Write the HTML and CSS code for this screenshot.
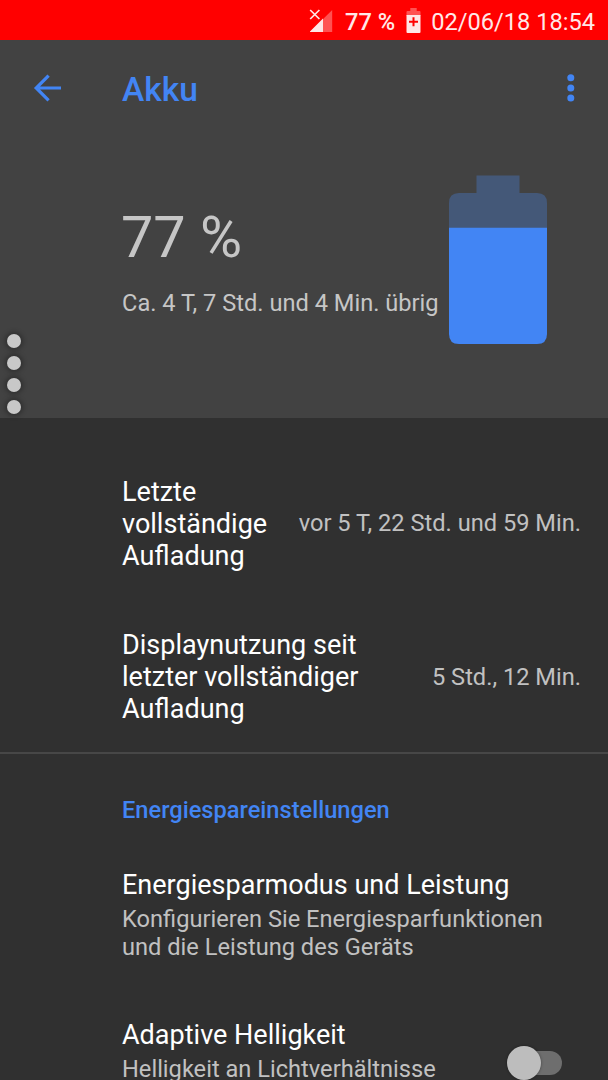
FILE: index.html
```html
<!DOCTYPE html>
<html lang="de">
<head>
<meta charset="utf-8">
<title>Akku</title>
<link rel="stylesheet" href="styles.css">
</head>
<body>
<div class="screen">
  <div class="statusbar">
    <svg class="signal" width="24" height="24" viewBox="0 0 24 24">
      <path d="M23.2 1V23H1Z" fill="#ff5252"/>
      <path d="M14 9.6V23H1V22.4Z" fill="#ffe6e6"/>
      <path d="M1.2 1L10.4 10M10.4 1L1.2 10" stroke="#ffe6e6" stroke-width="1.7"/>
    </svg>
    <span class="percent">77 %</span>
    <svg class="status-battery" width="15" height="26" viewBox="0 0 15 26">
      <path d="M4.3 0H10.7V3H13.5Q14.5 3 14.5 4V8H.5V4Q.5 3 1.5 3H4.3Z" fill="#ff5252"/>
      <path d="M.5 7H14.5V24Q14.5 25 13.5 25H1.5Q.5 25 .5 24Z" fill="#ffe6e6"/>
      <path d="M7.5 9.2V18.2M3 13.7H12" stroke="#f00" stroke-width="2"/>
    </svg>
    <span class="clock">02/06/18 18:54</span>
  </div>
  <header class="header">
    <div class="toolbar">
      <svg class="back" width="30" height="30" viewBox="0 0 30 30">
        <path d="M28 15H3M15.6 2.6L3.2 15L15.6 27.4" fill="none" stroke="#4285f4" stroke-width="3.2"/>
      </svg>
      <h1 class="title">Akku</h1>
      <svg class="more" width="8" height="28" viewBox="0 0 8 28">
        <circle cx="3.8" cy="3.8" r="3.5" fill="#4285f4"/>
        <circle cx="3.8" cy="13.9" r="3.5" fill="#4285f4"/>
        <circle cx="3.8" cy="24" r="3.5" fill="#4285f4"/>
      </svg>
    </div>
    <div class="summary">
      <div class="level">
        <div class="level-value">77 %</div>
        <div class="level-time">Ca. 4 T, 7 Std. und 4 Min. übrig</div>
      </div>
      <svg class="battery" width="98" height="170" viewBox="0 0 98 170">
        <path d="M27.5 .5H70.5V18H88Q98 18 98 28V53H0V28Q0 18 10 18H27.5Z" fill="#445878"/>
        <path d="M0 52.7H98V159Q98 169 88 169H10Q0 169 0 159Z" fill="#4285f4"/>
      </svg>
    </div>
  </header>
  <div class="handle"><i class="dot"></i><i class="dot"></i><i class="dot"></i><i class="dot"></i></div>
  <section class="stats">
    <div class="row">
      <div class="label">Letzte<br>vollständige<br>Aufladung</div>
      <div class="value">vor 5 T, 22 Std. und 59 Min.</div>
    </div>
    <div class="row">
      <div class="label">Displaynutzung seit<br>letzter vollständiger<br>Aufladung</div>
      <div class="value">5 Std., 12 Min.</div>
    </div>
  </section>
  <section class="settings">
    <h2 class="category">Energiespareinstellungen</h2>
    <div class="item">
      <div class="label">Energiesparmodus und Leistung</div>
      <div class="desc">Konfigurieren Sie Energiesparfunktionen<br>und die Leistung des Geräts</div>
    </div>
    <div class="item item-switch">
      <div>
        <div class="label">Adaptive Helligkeit</div>
        <div class="desc">Helligkeit an Lichtverhältnisse</div>
      </div>
      <div class="switch"><div class="thumb"></div></div>
    </div>
  </section>
</div>
</body>
</html>
```
FILE: styles.css
```css
* { box-sizing: border-box; }
body {
  margin: 0;
  background: #303030;
  color: #fff;
  font-family: Roboto, "Noto Sans", sans-serif;
}
.screen {
  position: relative;
  width: 608px;
  height: 1080px;
  overflow: hidden;
}
.statusbar {
  height: 40px;
  display: flex;
  align-items: flex-start;
  padding: 9px 13px 0 309px;
  background: #f00;
  color: #ffe8e8;
  font-size: 23.64px;
  line-height: 26px;
  white-space: nowrap;
}
.percent { margin-left: 12px; font-weight: 500; }
.signal { flex: none; }
.status-battery { flex: none; margin: -1px 0 0 auto; }
.clock { margin-left: 10px; }
.header { height: 378px; background: #424242; }
.toolbar {
  height: 95px;
  display: flex;
  align-items: center;
  padding: 0 33px;
}
.title {
  margin: 4px auto 0 59px;
  font-size: 33.6px;
  font-weight: 500;
  line-height: 40px;
  color: #4285f4;
}
.summary {
  display: flex;
  justify-content: space-between;
  padding: 40px 61px 0 122px;
}
.level { color: #c6c6c6; padding-top: 29px; white-space: nowrap; }
.level-value { margin-left: -1px; font-size: 57.5px; line-height: 68px; }
.level-time { margin-top: 17px; font-size: 23.64px; line-height: 28px; }
.battery { flex: none; margin-left: -20px; }
.handle {
  position: absolute;
  left: 7px;
  top: 334px;
  display: grid;
  gap: 8px;
}
.dot {
  width: 14px;
  height: 14px;
  border-radius: 50%;
  background: #c8c8c8;
  box-shadow: 0 0 5px 2px rgba(0, 0, 0, .3);
}
.stats {
  display: grid;
  gap: 57px;
  padding: 59px 28px 26px 122px;
  border-bottom: 2px solid #474747;
}
.row { display: flex; align-items: center; justify-content: space-between; height: 96px; }
.row .value { margin: -2px -1px 0 0; }
.row:first-child .value { margin-top: -4px; }
.label { font-size: 27.02px; line-height: 31.67px; white-space: nowrap; }
.value { font-size: 23.64px; line-height: 28px; color: #c1c1c1; white-space: nowrap; }
.settings { padding: 42px 46px 0 122px; }
.category {
  margin: 0;
  font-size: 23.64px;
  font-weight: 500;
  line-height: 28px;
  color: #4285f4;
}
.item { margin-top: 46px; }
.desc { margin-top: 3px; font-size: 23.64px; line-height: 28px; color: #c1c1c1; white-space: nowrap; }
.item-switch { display: flex; justify-content: space-between; margin-top: 59px; }
.item-switch .desc { margin-top: 4px; }
.switch {
  width: 51px;
  height: 24px;
  margin-top: 31px;
  border-radius: 12px;
  background: #6e6e6e;
}
.thumb {
  width: 34px;
  height: 34px;
  margin: -5px 0 0 -4px;
  border-radius: 50%;
  background: #bdbdbd;
  box-shadow: 0 0 3px rgba(0, 0, 0, .4);
}
```
